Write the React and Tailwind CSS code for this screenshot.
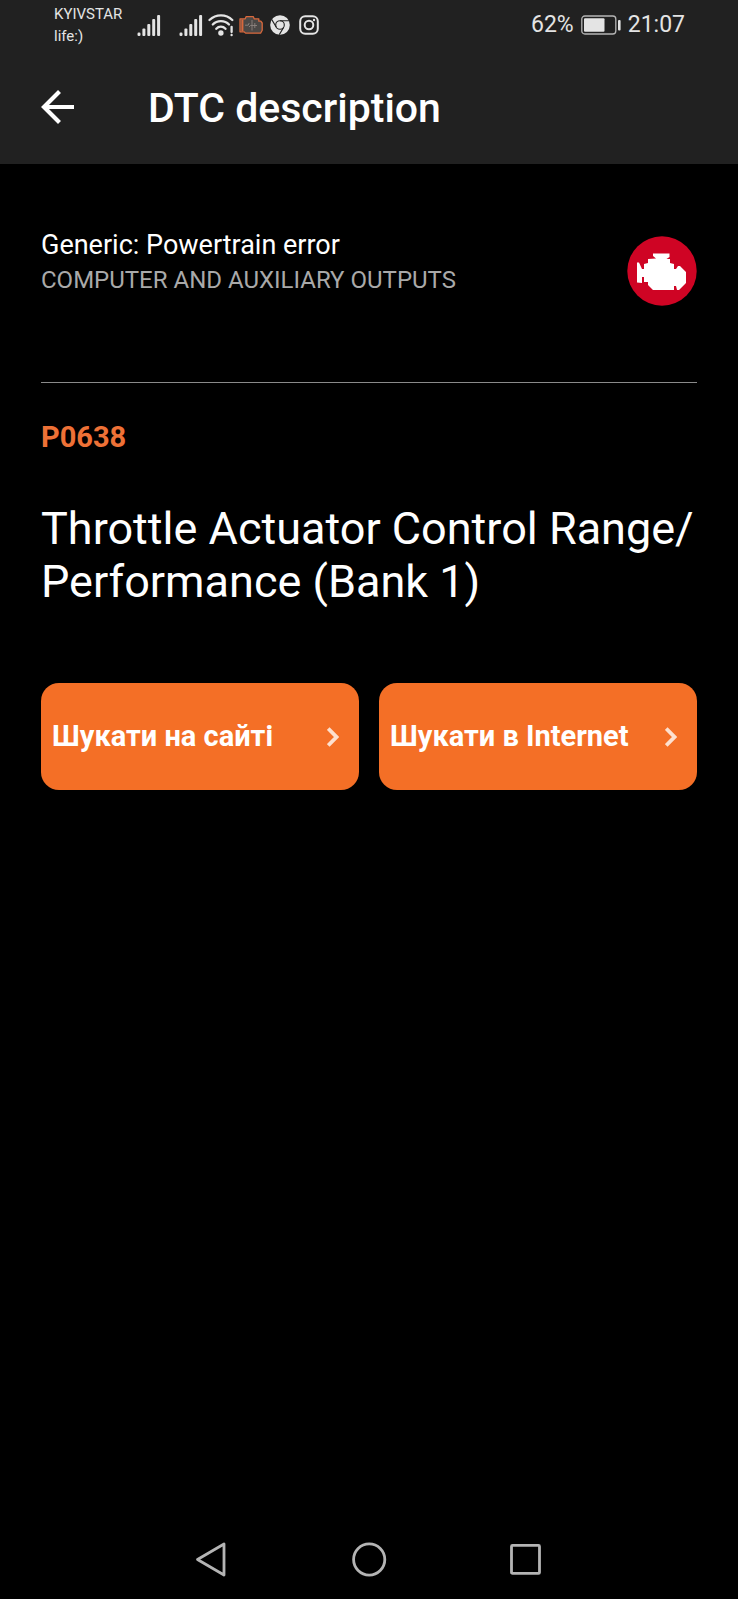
import React from 'react';

const SignalIcon = () => (
  <svg className="w-6 h-6" viewBox="0 0 24 24" fill="#e4e4e4">
    <rect x="0.5" y="19.5" width="3" height="3.5" rx="1.2" />
    <rect x="5.4" y="15.5" width="3" height="7.5" rx="1" />
    <rect x="10.3" y="11" width="3" height="12" rx="1" />
    <rect x="15.2" y="6" width="3" height="17" rx="1" />
    <rect x="20.1" y="2" width="3" height="21" rx="1" />
  </svg>
);

const WifiAlertIcon = () => (
  <svg className="w-[26px] h-6" viewBox="0 0 26 24" fill="none" stroke="#e4e4e4" strokeWidth="2.3" strokeLinecap="round">
    <path d="M1.5 7C8 0.7 18 0.7 24.3 7" />
    <path d="M4.8 11.5C9 7 16.8 7 21 11.5" />
    <path d="M8.3 15.8C10.8 13 15 13 17.5 15.8" />
    <circle cx="12.9" cy="20" r="2.7" fill="#e4e4e4" stroke="none" />
    <path d="M23.6 13.8v5.2M23.6 22v0.2" />
  </svg>
);

const ScannerIcon = () => (
  <svg className="w-6 h-5" viewBox="0 0 24 20" fill="#4b4846" stroke="#d9683c" strokeWidth="1.3" strokeLinejoin="round">
    <path d="M1 3.8h5.2l1-2.2h7l1 2.2h4.6v2.4h2L23.2 8v7.2l-1.6 3H6.8L5 16.8H1z" />
    <path d="M3.4 4.5v11.8" strokeWidth="2" />
    <path d="M6 10.2h3.2l1-2.2M13 5v10.5M10 12l1.5-1.5h6.5M15.8 8v5" fill="none" stroke="#8d8580" strokeWidth="0.9" />
  </svg>
);

const ChromeIcon = () => (
  <svg className="w-5 h-5" viewBox="0 0 20 20">
    <circle cx="10" cy="10" r="9.8" fill="#e4e4e4" />
    <g fill="none" stroke="#212121" strokeWidth="1.1">
      <circle cx="10" cy="10" r="4.3" />
      <path d="M10 5.7h9M13.7 12.2 9.3 19.6M6.3 12.2 1.8 4.6" />
    </g>
    <circle cx="10" cy="10" r="2.9" fill="#e4e4e4" />
  </svg>
);

const InstagramIcon = () => (
  <svg className="w-5 h-5" viewBox="0 0 20 20" fill="none" stroke="#e4e4e4" strokeWidth="2">
    <rect x="1.2" y="1.2" width="17.6" height="17.6" rx="5" />
    <circle cx="10" cy="10" r="4.3" />
    <circle cx="15" cy="5" r="1.2" fill="#e4e4e4" stroke="none" />
  </svg>
);

const BatteryIcon = () => (
  <svg className="w-10 h-5" viewBox="0 0 40 20">
    <rect x="0.8" y="1" width="34" height="18" rx="3" fill="none" stroke="#b5b5b5" strokeWidth="1.3" />
    <rect x="3" y="3.2" width="20.5" height="13.6" rx="1" fill="#e4e4e4" />
    <rect x="37" y="5" width="2.6" height="10.5" rx="1" fill="#e4e4e4" />
  </svg>
);

const EngineBadge = () => (
  <svg className="w-[70px] h-[70px] shrink-0" viewBox="0 0 70 70">
    <circle cx="35" cy="35" r="34.7" fill="#cf0424" />
    <path
      fill="#fff"
      d="M26 17.5H42.5V21L39.5 23H43V27L47 28V33H49L51 30H53L59 36V47L52 54H50L49 50H47V54H26L21 49V46H17V41H15V47L10 46.500V26.500H12L15 33H17V28L21 27V23L29 22.500L26 20Z"
    />
  </svg>
);

const actions = ['Шукати на сайті', 'Шукати в Internet'];

const App = () => {
  return (
    <div className="min-h-screen flex flex-col bg-black text-white font-['Roboto',sans-serif]">
      {/* Status bar and app bar */}
      <header className="bg-[#212121]">
        <div className="h-[50px] pl-[54px] pr-[53px] flex items-center justify-between text-[#e4e4e4]">
          <div className="flex items-center">
            <div className="w-[83px] text-[15px] leading-[22px]">
              <p>KYIVSTAR</p>
              <p>life:)</p>
            </div>
            <SignalIcon />
            <div className="ml-[18px] flex items-center gap-[5px]">
              <SignalIcon />
              <WifiAlertIcon />
              <ScannerIcon />
            </div>
            <div className="ml-[7px] flex items-center gap-[9px]">
              <ChromeIcon />
              <InstagramIcon />
            </div>
          </div>
          <div className="flex items-center gap-[7px] text-[23px]">
            <span>62%</span>
            <BatteryIcon />
            <span>21:07</span>
          </div>
        </div>

        <div className="h-[114px] px-[41px] flex items-center gap-[73px]">
          <button type="button" aria-label="Back">
            <svg className="w-[34px] h-[34px]" viewBox="0 0 34 34" fill="none" stroke="#fff" strokeWidth="4.2">
              <path d="M33 17H3M18.5 1.5 3 17l15.5 15.5" />
            </svg>
          </button>
          <h1 className="pt-0.5 text-[41px] leading-[48px] font-medium">DTC description</h1>
        </div>
      </header>

      <main className="flex-1 px-[41px] pt-16">
        {/* Error group */}
        <div className="flex items-start justify-between pb-[76px] border-b border-[#8a8a8a]">
          <div className="leading-[35px]">
            <p className="text-[27px]">Generic: Powertrain error</p>
            <p className="text-2xl leading-[35px] text-[#a9a9a9]">COMPUTER AND AUXILIARY OUTPUTS</p>
          </div>
          <div className="pt-2">
            <EngineBadge />
          </div>
        </div>

        <p className="mt-9 text-[29px] leading-9 font-bold text-[#ee7136]">P0638</p>
        <h2 className="mt-[47px] text-[45px] leading-[53px]">
          Throttle Actuator Control Range/<wbr />Performance (Bank 1)
        </h2>

        <div className="mt-[75px] grid grid-cols-2 gap-5">
          {actions.map((label) => (
            <button
              key={label}
              type="button"
              className="h-[107px] pl-[11px] pr-5 flex items-center justify-between rounded-[18px] bg-[#f46f26] text-[29px] font-bold"
            >
              <span>{label}</span>
              <svg className="w-3 h-5" viewBox="0 0 12 20" fill="none" stroke="#fde0cf" strokeWidth="3.8">
                <path d="M1.2 1.5 9.5 10l-8.3 8.5" />
              </svg>
            </button>
          ))}
        </div>
      </main>

      {/* System navigation */}
      <nav className="h-20 flex items-center justify-center gap-[122px]">
        <button type="button" aria-label="System back">
          <svg className="w-[35px] h-[35px]" viewBox="0 0 35 35" fill="none" stroke="#b4b4b4" strokeWidth="2.8" strokeLinejoin="round">
            <path d="M29 2v31L2.500 17.500z" />
          </svg>
        </button>
        <button type="button" aria-label="Home">
          <svg className="w-[35px] h-[35px]" viewBox="0 0 35 35" fill="none" stroke="#b4b4b4" strokeWidth="2.8">
            <circle cx="17.2" cy="17.5" r="15.6" />
          </svg>
        </button>
        <button type="button" aria-label="Recent apps">
          <svg className="w-[35px] h-[35px]" viewBox="0 0 35 35" fill="none" stroke="#b4b4b4" strokeWidth="2.8">
            <rect x="2.5" y="3.4" width="28" height="28" rx="1" />
          </svg>
        </button>
      </nav>
    </div>
  );
};

export default App;
